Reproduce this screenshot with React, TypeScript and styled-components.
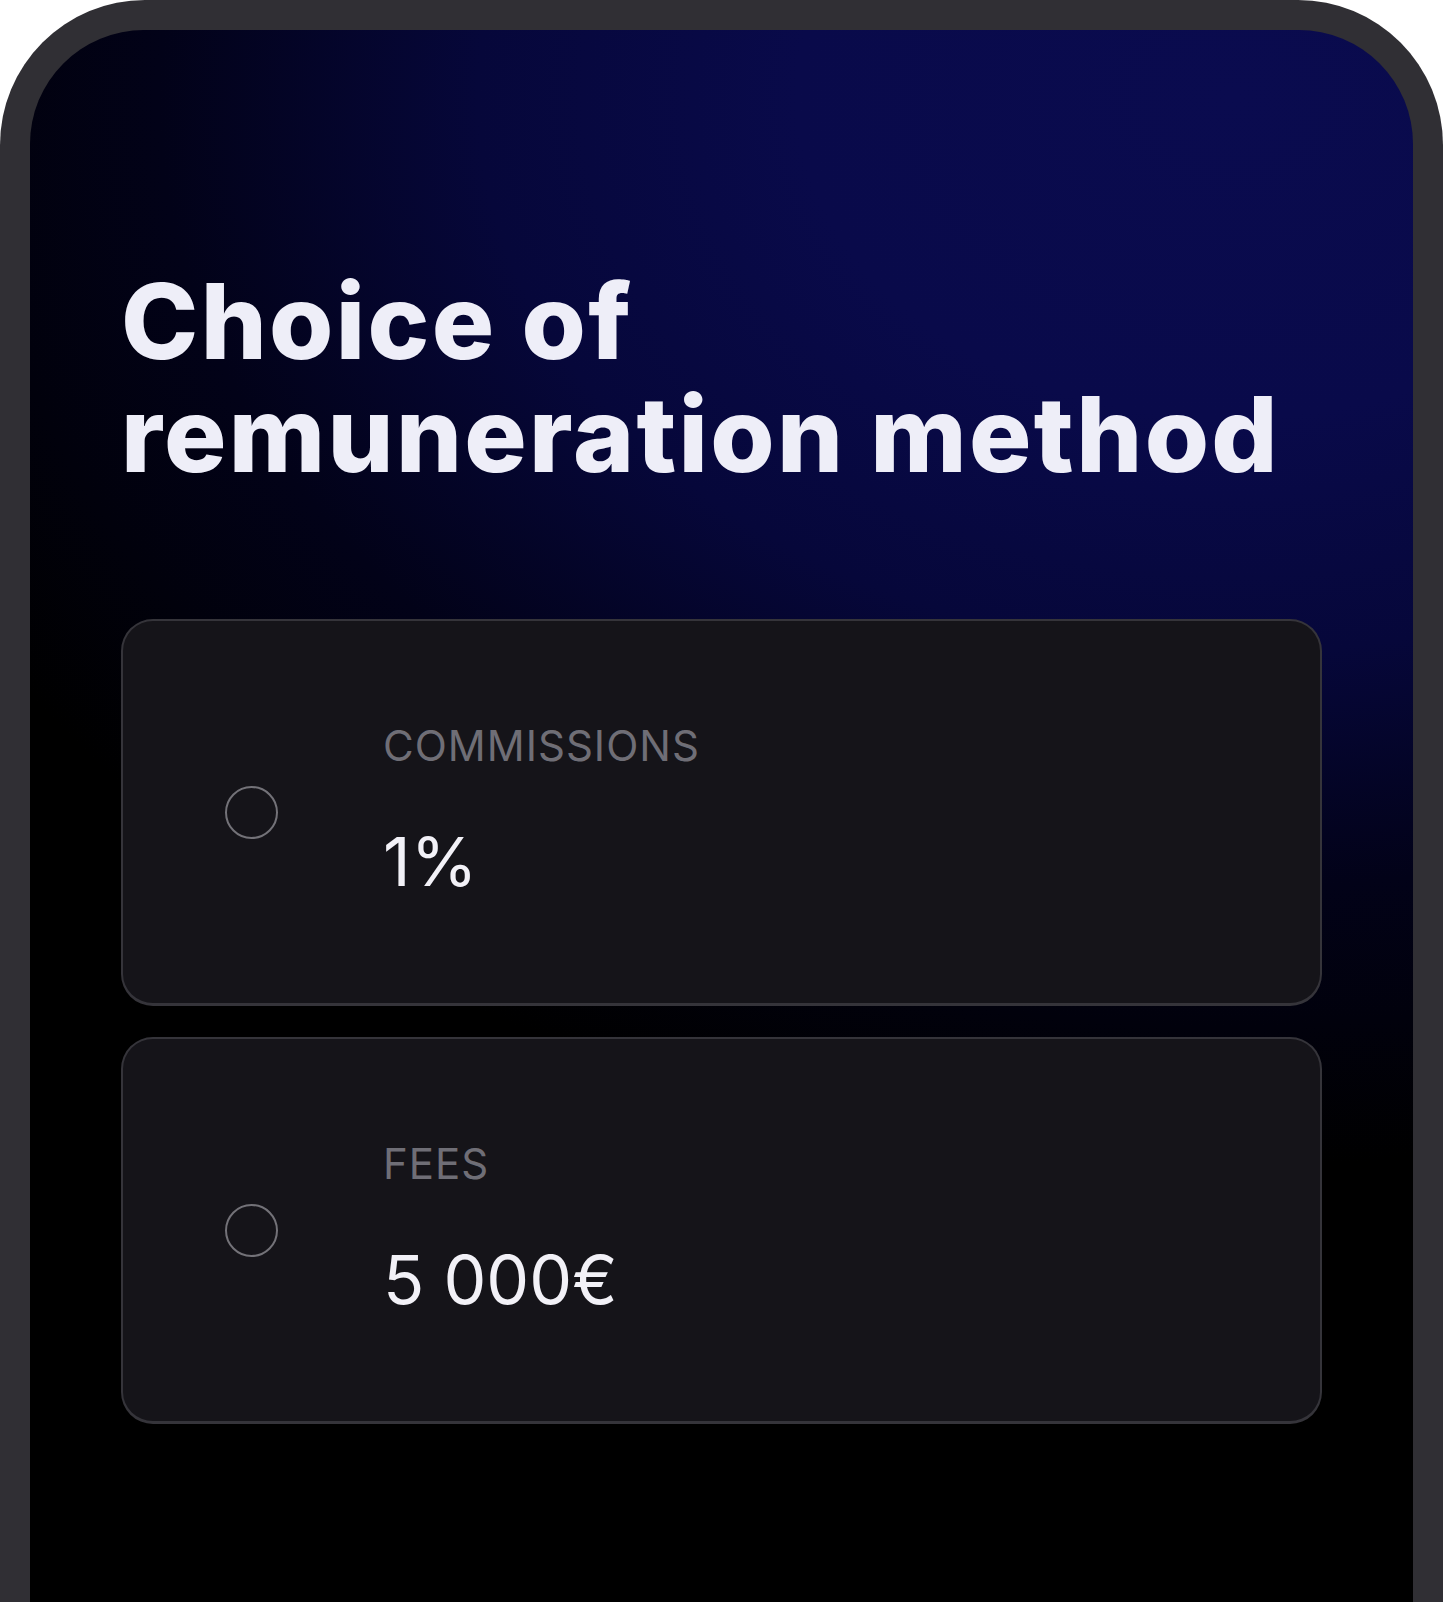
import styled, { createGlobalStyle } from "styled-components";

interface Option {
  id: string;
  label: string;
  value: string;
}

const options: Option[] = [
  { id: "commissions", label: "COMMISSIONS", value: "1%" },
  { id: "fees", label: "FEES", value: "5 000€" },
];

const GlobalStyle = createGlobalStyle`
  html, body {
    margin: 0;
    padding: 0;
    background: #ffffff;
  }
  body {
    font-family: Inter, "Noto Sans", sans-serif;
    -webkit-font-smoothing: antialiased;
  }
`;

const Page = styled.div`
  width: 1443px;
  height: 1602px;
  overflow: hidden;
  background: #ffffff;
`;

const PhoneFrame = styled.div`
  display: flex;
  flex-direction: column;
  box-sizing: border-box;
  min-height: 1700px;
  padding: 30px 30px 0;
  background: #302f34;
  border-radius: 145px 145px 0 0;
`;

const Screen = styled.main`
  flex: 1;
  display: flex;
  flex-direction: column;
  padding: 235px 91px 0 91px;
  border-radius: 114px 114px 0 0;
  background:
    radial-gradient(
      ellipse 105% 64% at 87% 4%,
      #0a0b4f 0%,
      #090a4a 30%,
      #06073a 52%,
      #020218 74%,
      #000000 100%
    ),
    #000000;
`;

const Heading = styled.h1`
  margin: 0 0 128px;
  font-family: Inter, "Liberation Sans", sans-serif;
  font-weight: 800;
  font-size: 104px;
  line-height: 113px;
  letter-spacing: 2.3px;
  color: #eeeef8;
`;

const HeadingLine = styled.span`
  display: block;
  white-space: nowrap;
`;

const OptionList = styled.div`
  display: flex;
  flex-direction: column;
  gap: 31px;
`;

const OptionCard = styled.label`
  display: flex;
  align-items: center;
  box-sizing: border-box;
  min-height: 387px;
  padding: 0 0 0 102px;
  background: #151419;
  border: 2px solid #35343a;
  border-bottom-width: 3px;
  border-radius: 32px;
  cursor: pointer;
`;

const Radio = styled.span<{ $checked?: boolean }>`
  flex: none;
  box-sizing: border-box;
  width: 53px;
  height: 53px;
  border-radius: 50%;
  border: 2.5px solid #737278;
  background: ${(p) => (p.$checked ? "#737278" : "transparent")};
`;

const TextBlock = styled.div`
  display: flex;
  flex-direction: column;
  gap: 48px;
  margin-left: 105px;
`;

const Label = styled.span`
  font-family: Inter, "Liberation Sans", sans-serif;
  font-size: 42px;
  line-height: 50px;
  font-weight: 400;
  letter-spacing: 1px;
  color: #6f6e76;
`;

const Value = styled.span`
  font-family: Inter, "Liberation Sans", sans-serif;
  font-size: 68px;
  line-height: 84px;
  font-weight: 400;
  color: #f2f1f7;
`;

export default function App() {
  return (
    <Page>
      <GlobalStyle />
      <PhoneFrame>
        <Screen>
          <Heading>
            <HeadingLine>Choice of</HeadingLine>
            <HeadingLine>remuneration method</HeadingLine>
          </Heading>
          <OptionList>
            {options.map((option) => (
              <OptionCard key={option.id}>
                <Radio />
                <TextBlock>
                  <Label>{option.label}</Label>
                  <Value>{option.value}</Value>
                </TextBlock>
              </OptionCard>
            ))}
          </OptionList>
        </Screen>
      </PhoneFrame>
    </Page>
  );
}
